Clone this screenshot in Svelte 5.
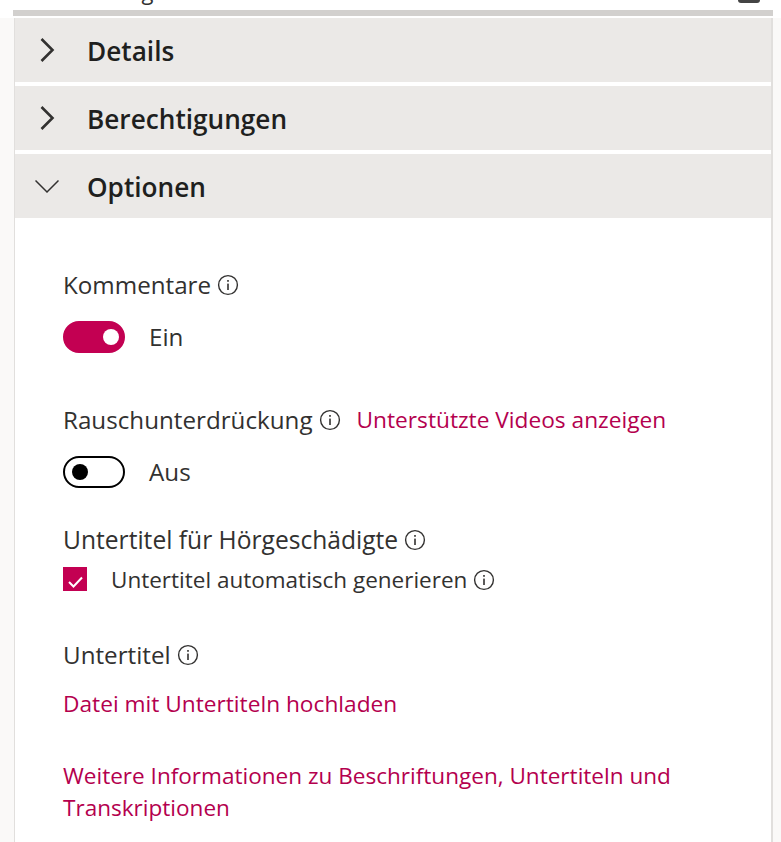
<script>
  const infoR = 9.4;
</script>

{#snippet info()}
  <svg class="info" width="22" height="22" viewBox="0 0 22 22" aria-hidden="true">
    <circle cx="11" cy="11" r={infoR} fill="none" stroke="#323130" stroke-width="1.4" />
    <rect x="10.2" y="9.6" width="1.6" height="6.4" fill="#323130" />
    <rect x="10.2" y="6" width="1.6" height="1.8" fill="#323130" />
  </svg>
{/snippet}

{#snippet chevronRight()}
  <svg class="chev" width="24" height="24" viewBox="0 0 24 24" aria-hidden="true">
    <path d="M6.5 1 L17.5 12 L6.5 23" fill="none" stroke="#323130" stroke-width="2.6" />
  </svg>
{/snippet}

<div class="page">
  <div class="header">
    <div class="topbar">
      <span class="clipped">Anzeige</span>
      <span class="clipped-icon"></span>
    </div>
    <div class="rule"></div>
  </div>

  <div class="panel">
    <div class="section">
      {@render chevronRight()}
      <span class="title">Details</span>
    </div>
    <div class="section">
      {@render chevronRight()}
      <span class="title">Berechtigungen</span>
    </div>
    <div class="section">
      <svg class="chev" width="24" height="24" viewBox="0 0 24 24" aria-hidden="true">
        <path d="M.5 6.5 L12 18 L23.5 6.5" fill="none" stroke="#323130" stroke-width="1.5" />
      </svg>
      <span class="title">Optionen</span>
    </div>

    <div class="body">
      <div class="label first">Kommentare {@render info()}</div>
      <div class="toggle-row">
        <span class="toggle on"><span class="knob"></span></span>
        <span>Ein</span>
      </div>

      <div class="label second">
        Rauschunterdrückung {@render info()}
        <a href="#videos" class="link side">Unterstützte Videos anzeigen</a>
      </div>
      <div class="toggle-row">
        <span class="toggle"><span class="knob"></span></span>
        <span>Aus</span>
      </div>

      <div class="label third">Untertitel für Hörgeschädigte {@render info()}</div>
      <div class="check-row">
        <span class="check">
          <svg width="24" height="24" viewBox="0 0 24 24" aria-hidden="true"><path d="M6 15 L10.5 19.5 L19 10.5" fill="none" stroke="#fff" stroke-width="2" /></svg>
        </span>
        <span>Untertitel automatisch generieren</span>
        {@render info()}
      </div>

      <div class="label fourth">Untertitel {@render info()}</div>
      <a href="#upload" class="link upload">Datei mit Untertiteln hochladen</a>
      <a href="#more" class="link more">Weitere Informationen zu Beschriftungen, Untertiteln und Transkriptionen</a>
    </div>
  </div>
</div>

<style>
  :global(body) {
    margin: 0;
    background: #faf9f8;
  }

  .page {
    width: 781px;
    height: 842px;
    overflow: hidden;
    font-family: "Open Sans", "Liberation Sans", sans-serif;
    color: #323130;
    font-size: 24.2px;
  }

  .header {
    background: #fff;
    height: 18px;
    padding: 0 8px 0 13px;
  }

  .topbar {
    height: 10px;
    display: flex;
    justify-content: space-between;
    overflow: hidden;
  }

  .clipped {
    font-size: 22px;
    line-height: 22px;
    margin-top: -20px;
    margin-left: 73px;
  }

  .clipped-icon {
    width: 22px;
    height: 3px;
    background: #444;
    border-radius: 0 0 3px 3px;
    margin-right: 13px;
  }

  .rule {
    height: 6px;
    background: #d2d0ce;
  }

  .panel {
    margin: 0 8px 0 14px;
    background: #fff;
    border-left: 1px solid #e1dfdd;
    border-right: 2px solid #e1dfdd;
    height: 824px;
  }

  .section {
    height: 64px;
    margin-bottom: 4px;
    background: #ebe9e7;
    display: flex;
    align-items: center;
    font-weight: 600;
    font-size: 26.2px;
    color: #201f1e;
    padding-left: 20px;
  }

  .title {
    padding-top: 2px;
  }

  .chev {
    margin-right: 28px;
    flex: none;
  }

  .body {
    padding-left: 48px;
    margin-top: -4px;
  }

  .label {
    display: flex;
    align-items: center;
    gap: 6px;
    line-height: 32px;
    white-space: nowrap;
  }

  .first { padding-top: 51px; }
  .second { padding-top: 51px; }
  .third { padding-top: 36px; font-size: 24.6px; }
  .fourth { padding-top: 43px; }

  .toggle-row {
    display: flex;
    align-items: center;
    gap: 24px;
    line-height: 32px;
    margin-top: 20px;
  }

  .toggle {
    box-sizing: border-box;
    width: 62px;
    height: 32px;
    border: 2px solid #000;
    border-radius: 16px;
    background: #fff;
    display: flex;
    align-items: center;
    padding-left: 7px;
    flex: none;
  }

  .toggle .knob {
    width: 16px;
    height: 16px;
    border-radius: 50%;
    background: #000;
  }

  .toggle.on {
    background: #c30052;
    border-color: #c30052;
    justify-content: flex-end;
    padding: 0 4px 0 0;
  }

  .toggle.on .knob {
    background: #fff;
  }

  .check-row {
    display: flex;
    align-items: center;
    line-height: 32px;
    margin-top: 8px;
    gap: 6px;
    white-space: nowrap;
    font-size: 22.5px;
  }

  .check {
    width: 24px;
    height: 24px;
    background: #c30052;
    display: flex;
    margin-right: 18px;
    margin-top: -2px;
  }

  .link {
    color: #b4004e;
    text-decoration: none;
    font-size: 22.7px;
  }

  .side {
    margin-left: 10px;
  }

  .upload {
    display: block;
    margin-top: 17px;
    line-height: 32px;
  }

  .more {
    display: block;
    margin-top: 40px;
    line-height: 32px;
    width: 640px;
    font-size: 22.55px;
  }
</style>
